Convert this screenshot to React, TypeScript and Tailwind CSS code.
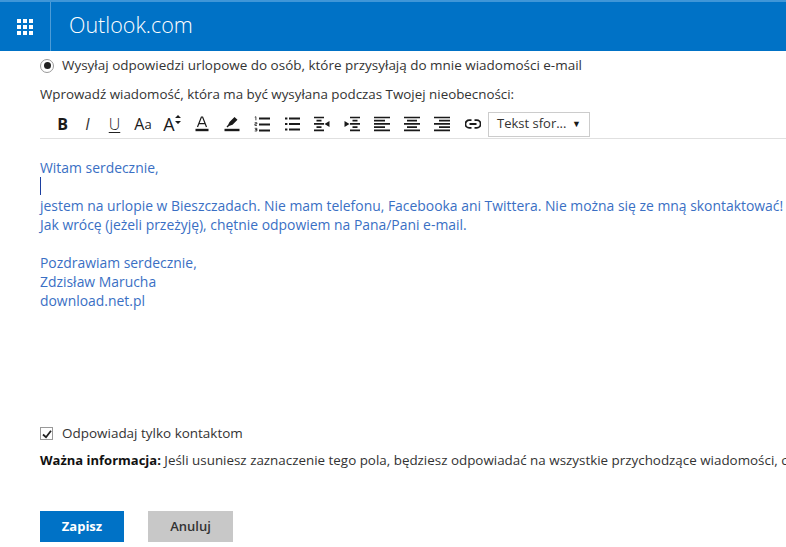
const INK = "#1a1a1a";

const Svg = ({ children }: { children: React.ReactNode }) => (
  <svg width="16" height="16" viewBox="0 0 16 16" className="shrink-0">
    {children}
  </svg>
);

const IconCell = ({ children }: { children: React.ReactNode }) => (
  <span className="flex h-6 w-[30px] items-center justify-center">{children}</span>
);

// five bars, long and short by turns, as in the align / indent buttons
const Bars = ({ long, short }: { long: [number, number]; short: [number, number] }) => (
  <path
    d={[0, 1, 2, 3, 4]
      .map((i) => {
        const [a, b] = i % 2 === 0 ? long : short;
        return `M${a} ${1.5 + i * 3.2}H${b}`;
      })
      .join("")}
    stroke={INK}
    strokeWidth="1.7"
  />
);

const Toolbar = () => (
  <div className="flex h-[27px] w-[746px] items-center border-b border-[#e0e0e0] pb-[2px] pl-[10px]">
    <span className="flex h-6 w-[25px] items-center justify-center text-[16px] font-bold text-[#1a1a1a]">B</span>
    <span className="flex h-6 w-[25px] items-center justify-center text-[16px] italic text-[#333]">I</span>
    <span className="flex h-6 w-[29px] items-center justify-center text-[16px] font-light text-[#222] underline underline-offset-2">U</span>
    <span className="flex h-6 w-[28px] items-end justify-center pb-[1px] text-[16px] leading-[22px] text-[#1a1a1a]">
      A<span className="text-[13px]">a</span>
    </span>
    <span className="flex h-6 w-[30px] items-center justify-center text-[#1a1a1a]">
      <span className="text-[18px] leading-6">A</span>
      <svg width="6" height="10" viewBox="0 0 6 10" className="mb-2">
        <path d="M3 0l3 3H0zM0 6h6L3 9z" fill={INK} />
      </svg>
    </span>
    <IconCell>
      <Svg>
        <path d="M3.500 11 7.400 1h1.200l3.900 10M5 7.600h6" fill="none" stroke={INK} strokeWidth="1.200" />
        <rect x="1.500" y="12.800" width="13" height="2.400" fill={INK} />
      </Svg>
    </IconCell>
    <IconCell>
      <Svg>
        <path d="M5.500 6 10.500 1l3 2.800-5 5-3.500 1.300-1.500 1.400-1-1 1.500-1.500z" fill={INK} />
        <rect x="0.500" y="12.800" width="15" height="2.400" fill={INK} />
      </Svg>
    </IconCell>
    <IconCell>
      <Svg>
        <path d="M5 2.500h11M5 8.500h11M5 14.500h11" stroke={INK} strokeWidth="2" />
        <path d="M.8 1.200 1.900.7V4.300M.7 6.700h2.200v1.200H.9v1.500h2.100M.7 12.300h2.200v1.300H1.400h1.500V15H.7" fill="none" stroke={INK} strokeWidth=".8" />
      </Svg>
    </IconCell>
    <IconCell>
      <Svg>
        <path d="M5 2.500h11M5 8h11M5 13.500h11" stroke={INK} strokeWidth="2" />
        <path d="M1 2.500h2.400M1 8h2.400M1 13.500h2.400" stroke={INK} strokeWidth="2" />
      </Svg>
    </IconCell>
    <IconCell>
      <Svg>
        <Bars long={[0, 10]} short={[2.500, 7.500]} />
        <path d="M10.500 8l5-3v6z" fill={INK} />
      </Svg>
    </IconCell>
    <IconCell>
      <Svg>
        <Bars long={[6, 16]} short={[8.500, 13.500]} />
        <path d="M5.500 8 .5 5v6z" fill={INK} />
      </Svg>
    </IconCell>
    <IconCell>
      <Svg>
        <Bars long={[0, 16]} short={[0, 11]} />
      </Svg>
    </IconCell>
    <IconCell>
      <Svg>
        <Bars long={[0, 16]} short={[3, 13]} />
      </Svg>
    </IconCell>
    <IconCell>
      <Svg>
        <Bars long={[0, 16]} short={[5, 16]} />
      </Svg>
    </IconCell>
    <span className="flex h-6 w-[31px] items-center justify-center">
      <Svg>
        <path d="M6.500 4.200H4.200a3.700 3.700 0 0 0 0 7.600h2.300M9.500 4.200h2.300a3.700 3.700 0 0 1 0 7.600H9.500M4.500 8h7" fill="none" stroke={INK} strokeWidth="1.800" />
      </Svg>
    </span>
    <div className="flex h-[25px] w-[102px] items-center justify-between border border-[#ccc] pl-2 pr-2 text-[13px] text-[#333]">
      <span>Tekst sfor...</span>
      <span className="text-[9px] text-[#1a1a1a]">▼</span>
    </div>
  </div>
);

export default function App() {
  return (
    <div className="h-[547px] w-[786px] overflow-hidden bg-white font-['Open_Sans','Noto_Sans',sans-serif] text-[13.480px] text-[#333]">
      <header className="flex h-[51px] items-stretch border-t-2 border-[#3f96d8] bg-[#0072c6] text-white">
        <div className="flex w-[51px] items-center justify-center border-r border-[#4d9cd7]">
          <div className="grid grid-cols-3 gap-[2px]">
            {Array.from({ length: 9 }).map((_, i) => (
              <span key={i} className="h-[4px] w-[4px] bg-white" />
            ))}
          </div>
        </div>
        <div className="flex items-center pb-[2px] pl-[18px] text-[21.500px] font-light">Outlook.com</div>
      </header>

      <main className="pl-10">
        <label className="mt-[5px] flex h-[19px] items-center">
          <span className="flex h-[14px] w-[14px] items-center justify-center rounded-full border border-[#999]">
            <span className="h-[7px] w-[7px] rounded-full bg-[#222]" />
          </span>
          <span className="ml-2">Wysyłaj odpowiedzi urlopowe do osób, które przysyłają do mnie wiadomości e-mail</span>
        </label>

        <p className="mt-[10px] h-[19px] text-[13.360px] leading-[19px]">
          Wprowadź wiadomość, która ma być wysyłana podczas Twojej nieobecności:
        </p>

        <div className="mt-[8px]">
          <Toolbar />
        </div>

        <div className="mt-[19px] h-[266px] whitespace-nowrap text-[13.920px] leading-[19px] text-[#3a6fc4]">
          <div>Witam serdecznie,</div>
          <div className="h-[19px]">
            <span className="block h-[18px] w-px bg-[#1c3fa0]" />
          </div>
          <div>jestem na urlopie w Bieszczadach. Nie mam telefonu, Facebooka ani Twittera. Nie można się ze mną skontaktować!</div>
          <div>Jak wrócę (jeżeli przeżyję), chętnie odpowiem na Pana/Pani e-mail.</div>
          <div className="h-[19px]" />
          <div>Pozdrawiam serdecznie,</div>
          <div>Zdzisław Marucha</div>
          <div>download.net.pl</div>
        </div>

        <label className="flex h-[19px] items-center">
          <span className="flex h-[13px] w-[13px] items-center justify-center border border-[#999]">
            <svg width="10" height="10" viewBox="0 0 10 10">
              <path d="M1 5.500 4 8.200 9 1.800" fill="none" stroke="#222" strokeWidth="1.800" />
            </svg>
          </span>
          <span className="ml-[9px]">Odpowiadaj tylko kontaktom</span>
        </label>

        <p className="mt-[8px] h-[19px] whitespace-nowrap text-[13.400px] leading-[19px]">
          <b className="text-[13px] text-[#111]">Ważna informacja:</b> Jeśli usuniesz zaznaczenie tego pola, będziesz odpowiadać na wszystkie przychodzące wiadomości, c
        </p>

        <div className="mt-[41px] flex gap-6">
          <button className="h-[31px] w-[84px] bg-[#0072c6] text-[13px] font-bold text-white">Zapisz</button>
          <button className="h-[31px] w-[85px] bg-[#c8c8c8] text-[13px] font-semibold text-[#333]">Anuluj</button>
        </div>
      </main>
    </div>
  );
}
